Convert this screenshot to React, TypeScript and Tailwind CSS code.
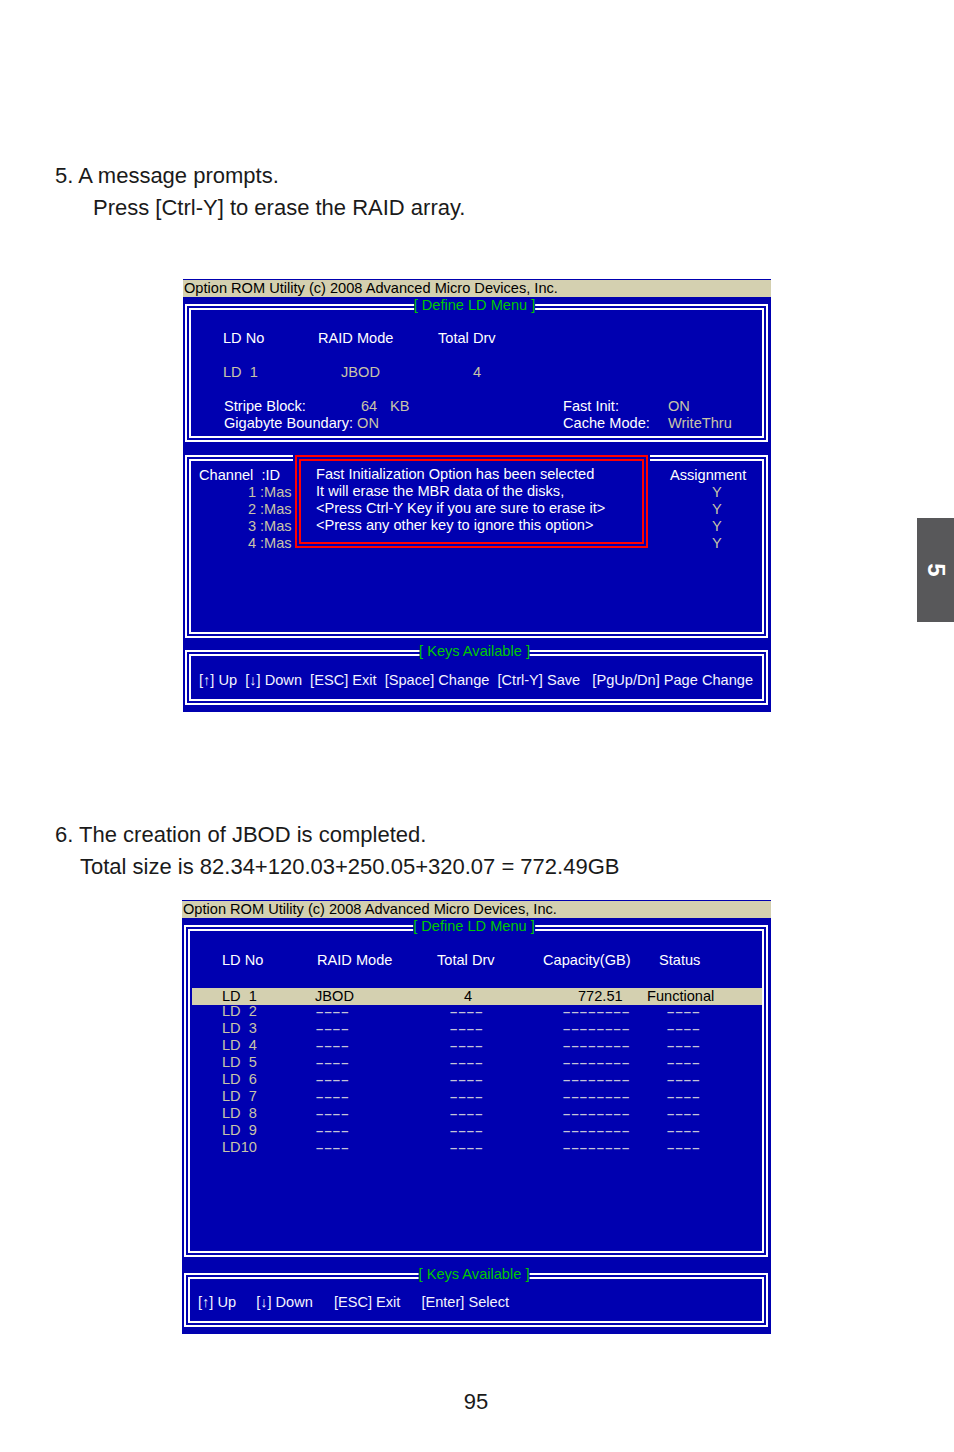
import React from "react";

function DBox({
  className,
  title,
  children,
}: {
  className: string;
  title?: string;
  children?: React.ReactNode;
}) {
  return (
    <div className={"relative border-2 border-white p-[2px] " + className}>
      <div className="border-2 border-white h-full">{children}</div>
      {title ? (
        <div className="absolute left-1/2 -translate-x-1/2 ml-[-2px] top-[-9px] bg-[#0000b0] text-[#00c800] leading-[17px] whitespace-pre">
          {title}
        </div>
      ) : null}
    </div>
  );
}

const G = "text-[#c8c4a8]";
const D = "font-bold text-[13px] tracking-[1.2px] text-[#c4c4d8]";

function Popup() {
  return (
    <div className="absolute left-[106px] top-[-4px] w-[357px] h-[97px] bg-[#0000b0] p-[2px]">
      <div className="border-2 border-[#ff0000] p-[2px] h-full">
        <div className="border-2 border-[#ff0000] h-full pl-[15px] pt-[5px] text-white whitespace-pre">
          <div>Fast Initialization Option has been selected</div>
          <div>It will erase the MBR data of the disks,</div>
          <div>{"<Press Ctrl-Y Key if you are sure to erase it>"}</div>
          <div>{"<Press any other key to ignore this option>"}</div>
        </div>
      </div>
    </div>
  );
}

function Screen1() {
  return (
    <div className="ml-[183px] w-[588px] h-[433px] bg-[#0000b0] pt-[1px] flex flex-col text-[14.6px] leading-[17px] text-white">
      <div className="h-[17px] bg-[#d4d0b0] text-black pl-[1px] leading-[17px] whitespace-pre">
        Option ROM Utility (c) 2008 Advanced Micro Devices, Inc.
      </div>
      <DBox className="mt-[7px] ml-[2px] mr-[3px] h-[138px]" title="[ Define LD Menu ]">
        <div className="pt-[20px] whitespace-pre">
          <div className="flex pl-[32px]">
            <span className="w-[95px]">LD No</span>
            <span className="w-[120px]">RAID Mode</span>
            <span>Total Drv</span>
          </div>
          <div className={"flex pl-[32px] mt-[17px] " + G}>
            <span className="w-[118px]">LD  1</span>
            <span className="w-[132px]">JBOD</span>
            <span>4</span>
          </div>
          <div className="flex pl-[33px] mt-[17px]">
            <span className="w-[137px]">Stripe Block:</span>
            <span className={"w-[29px] " + G}>64</span>
            <span className={"w-[173px] " + G}>KB</span>
            <span className="w-[105px]">Fast Init:</span>
            <span className={G}>ON</span>
          </div>
          <div className="flex pl-[33px]">
            <span className="w-[339px]">
              Gigabyte Boundary: <span className={G}>ON</span>
            </span>
            <span className="w-[105px]">Cache Mode:</span>
            <span className={G}>WriteThru</span>
          </div>
        </div>
      </DBox>
      <div className="relative mt-[13px] ml-[2px] mr-[3px] h-[183px] border-2 border-white p-[2px]">
        <div className="border-2 border-white h-full">
          <div className="flex pt-[6px] pl-[8px] whitespace-pre">
            <div className="w-[471px]">
              <div>Channel  :ID</div>
              {["1", "2", "3", "4"].map((n) => (
                <div key={n} className={"flex " + G}>
                  <span className="w-[57px] text-right">{n}</span>
                  <span className="pl-[4px]">:Mas</span>
                </div>
              ))}
            </div>
            <div>
              <div>Assignment</div>
              {["a", "b", "c", "d"].map((k) => (
                <div key={k} className={"pl-[42px] " + G}>
                  Y
                </div>
              ))}
            </div>
          </div>
        </div>
        <Popup />
      </div>
      <DBox className="mt-[12px] ml-[2px] mr-[3px] h-[55px]" title="[ Keys Available ]">
        <div className="pt-[16px] pl-[8px] whitespace-pre text-[#f4f4ff]">
          [↑] Up  [↓] Down  [ESC] Exit  [Space] Change  [Ctrl-Y] Save   [PgUp/Dn] Page Change
        </div>
      </DBox>
    </div>
  );
}

function Screen2() {
  const rows = ["LD  2", "LD  3", "LD  4", "LD  5", "LD  6", "LD  7", "LD  8", "LD  9", "LD10"];
  return (
    <div className="ml-[182px] w-[589px] h-[434px] bg-[#0000b0] pt-[1px] flex flex-col text-[14.6px] leading-[17px] text-white">
      <div className="h-[17px] bg-[#d4d0b0] text-black pl-[1px] leading-[17px] whitespace-pre">
        Option ROM Utility (c) 2008 Advanced Micro Devices, Inc.
      </div>
      <DBox className="mt-[7px] ml-[2px] mr-[3px] h-[332px]" title="[ Define LD Menu ]">
        <div className="pt-[21px] whitespace-pre">
          <div className="flex pl-[32px]">
            <span className="w-[95px]">LD No</span>
            <span className="w-[120px]">RAID Mode</span>
            <span className="w-[106px]">Total Drv</span>
            <span className="w-[116px]">Capacity(GB)</span>
            <span>Status</span>
          </div>
          <div className="flex ml-[2px] mt-[19px] h-[17px] bg-[#d4d0b0] pl-[30px] text-black">
            <span className="w-[93px]">LD  1</span>
            <span className="w-[149px]">JBOD</span>
            <span className="w-[114px]">4</span>
            <span className="w-[69px]">772.51</span>
            <span>Functional</span>
          </div>
          <div className={"-mt-[2px] " + G}>
            {rows.map((r) => (
              <div key={r} className="flex items-baseline pl-[32px] h-[17px]">
                <span className="w-[94px]">{r}</span>
                <span className={"w-[134px] " + D}>––––</span>
                <span className={"w-[113px] " + D}>––––</span>
                <span className={"w-[104px] " + D}>––––––––</span>
                <span className={D}>––––</span>
              </div>
            ))}
          </div>
        </div>
      </DBox>
      <DBox className="mt-[16px] ml-[2px] mr-[3px] h-[54px]" title="[ Keys Available ]">
        <div className="flex pt-[15px] pl-[8px] whitespace-pre text-[#f4f4ff]">
          <span>[↑] Up</span>
          <span className="ml-[20px]">[↓] Down</span>
          <span className="ml-[21px]">[ESC] Exit</span>
          <span className="ml-[21px]">[Enter] Select</span>
        </div>
      </DBox>
    </div>
  );
}

export default function App() {
  return (
    <div
      className="relative w-[954px] h-[1452px] bg-white overflow-hidden text-[#1a1a1a]"
      style={{ fontFamily: '"Liberation Sans", Arial, sans-serif' }}
    >
      <div className="flex flex-col pt-[160px]">
        <div className="text-[22px] leading-[32px]">
          <p className="pl-[55px]">5. A message prompts.</p>
          <p className="pl-[93px]">Press [Ctrl-Y] to erase the RAID array.</p>
        </div>
        <div className="mt-[55px]">
          <Screen1 />
        </div>
        <div className="mt-[107px] text-[22px] leading-[32px]">
          <p className="pl-[55px]">6. The creation of JBOD is completed.</p>
          <p className="pl-[80px]">Total size is 82.34+120.03+250.05+320.07 = 772.49GB</p>
        </div>
        <div className="mt-[17px]">
          <Screen2 />
        </div>
        <div className="mt-[52px] text-[22px] leading-[32px] text-center pr-[2px]">95</div>
      </div>
      <div className="absolute right-0 top-[518px] w-[37px] h-[104px] bg-[#58585a] flex items-center justify-center">
        <span className="rotate-90 text-white font-bold text-[24px] leading-none">5</span>
      </div>
    </div>
  );
}
